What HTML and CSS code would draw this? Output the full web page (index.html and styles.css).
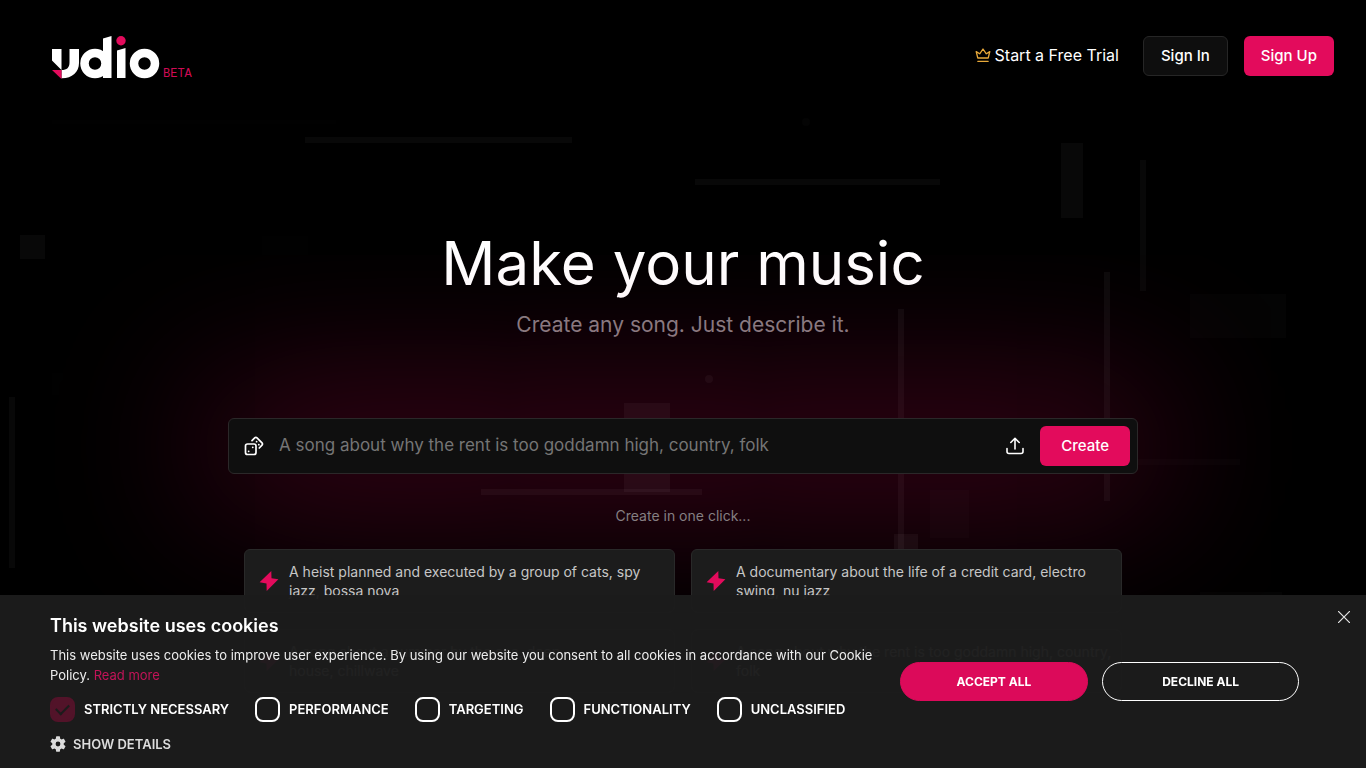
FILE: index.html
```
<!DOCTYPE html>
<html lang="en">
<head>
<meta charset="utf-8">
<meta name="viewport" content="width=device-width, initial-scale=1">
<title>Udio | Make your music</title>
<link rel="stylesheet" href="styles.css">
</head>
<body>
<svg class="backdrop" viewBox="0 0 1366 768" preserveAspectRatio="xMidYMin slice" aria-hidden="true">
  <g fill="#fff">
    <g fill-opacity=".032">
      <rect x="305" y="137" width="267" height="6"/>
      <rect x="695" y="179" width="245" height="6"/>
      <rect x="1061" y="143" width="22" height="75"/>
      <rect x="1140" y="160" width="6" height="131"/>
      <rect x="20" y="235" width="25" height="24"/>
      <rect x="9" y="397" width="6" height="171"/>
    </g>
    <g fill-opacity=".045">
      <rect x="898" y="309" width="6" height="240"/>
      <rect x="1104" y="272" width="6" height="229"/>
      <rect x="624" y="403" width="46" height="89"/>
      <rect x="481" y="489" width="221" height="6"/>
      <rect x="894" y="534" width="24" height="24"/>
      <circle cx="709" cy="379" r="4"/>
    </g>
    <g fill-opacity=".014">
      <rect x="930" y="490" width="39" height="48"/>
      <rect x="1138" y="459" width="102" height="6"/>
      <rect x="1190" y="294" width="96" height="44"/>
      <rect x="1200" y="592" width="82" height="36"/>
      <circle cx="806" cy="122" r="4"/>
    </g>
    <g fill-opacity=".005">
      <rect x="52" y="120" width="284" height="4"/>
      <rect x="262" y="236" width="46" height="24"/>
      <rect x="52" y="373" width="46" height="22"/>
    </g>
  </g>
</svg>

<header class="topbar">
  <a class="brand" href="#" aria-label="Udio beta">
    <svg class="brand-mark" width="108" height="43" viewBox="0 0 108 43" aria-hidden="true">
      <g fill="#fff">
        <path d="M0 13h9.500v21L0 24.500zM17.500 13H27v14c0 9-7 15.500-17.500 15.300V34c5.500 0 8-2.500 8-7.500z"/>
        <path d="M51 2.500 59.500 0v42H51z"/>
        <path d="M65 14.500 73.500 12v30H65z"/>
      </g>
      <circle cx="43" cy="27.500" r="10.500" fill="none" stroke="#fff" stroke-width="8.500"/>
      <circle cx="92.500" cy="27.500" r="10.500" fill="none" stroke="#fff" stroke-width="8.500"/>
      <circle cx="69" cy="4.800" r="4.700" fill="#e30b5c"/>
      <path d="M0 34h9.500v9z" fill="#e30b5c"/>
    </svg>
    <span class="brand-tag">BETA</span>
  </a>
  <nav class="account">
    <a class="trial" href="#">
      <svg width="16" height="16" viewBox="0 0 16 16" fill="none" stroke="#e8a93a" stroke-width="1.300" stroke-linejoin="round" stroke-linecap="round" aria-hidden="true">
        <path d="M2.800 11 1.200 4.600l3.500 2.200L8 2l3.300 4.800 3.500-2.200L13.200 11zM2.800 14.300h10.400"/>
      </svg>
      Start a Free Trial
    </a>
    <button class="btn btn-dark" type="button">Sign In</button>
    <button class="btn btn-pink" type="button">Sign Up</button>
  </nav>
</header>

<main class="hero">
  <h1 class="headline">Make your music</h1>
  <p class="tagline">Create any song. Just describe it.</p>

  <form class="prompt">
    <button class="icon-btn" type="button" aria-label="Random prompt">
      <svg width="20" height="20" viewBox="0 0 20 20" fill="none" stroke="#fff" stroke-width="1.700" stroke-linecap="round" stroke-linejoin="round" aria-hidden="true">
        <rect x="1.500" y="8" width="10.500" height="10.500" rx="2"/>
        <path d="m8 4.600 2.700-2.700a1.600 1.600 0 0 1 2.300 0l5 5a1.600 1.600 0 0 1 0 2.300L15.300 12"/>
        <path d="M4.600 15.300h.1M8.700 11.300h.1M12.600 5.600v.1M14.800 8.700h.1"/>
      </svg>
    </button>
    <input class="prompt-input" type="text" aria-label="Describe your song" placeholder="A song about why the rent is too goddamn high, country, folk">
    <button class="icon-btn" type="button" aria-label="Upload audio">
      <svg width="20" height="20" viewBox="0 0 20 20" fill="none" stroke="#fff" stroke-width="1.600" stroke-linecap="round" stroke-linejoin="round" aria-hidden="true">
        <path d="M2 12.500v3a2 2 0 0 0 2 2h12a2 2 0 0 0 2-2v-3M10 13V2.500M5.800 6.500 10 2.300l4.200 4.200"/>
      </svg>
    </button>
    <button class="btn btn-pink btn-create" type="submit">Create</button>
  </form>

  <p class="hint">Create in one click...</p>

  <div class="ideas">
    <button class="idea" type="button">
      <svg class="bolt" width="20" height="20" viewBox="0 0 20 20" aria-hidden="true"><path d="M12.300 0 .6 11.300l6.900 1.200L7.700 20 19.400 8.300l-6.900-1z"/></svg>
      <span>A heist planned and executed by a group of cats, spy jazz, bossa nova</span>
    </button>
    <button class="idea" type="button">
      <svg class="bolt" width="20" height="20" viewBox="0 0 20 20" aria-hidden="true"><path d="M12.300 0 .6 11.300l6.900 1.200L7.700 20 19.400 8.300l-6.900-1z"/></svg>
      <span>A documentary about the life of a credit card, electro swing, nu jazz</span>
    </button>
    <button class="idea" type="button">
      <svg class="bolt" width="20" height="20" viewBox="0 0 20 20" aria-hidden="true"><path d="M12.300 0 .6 11.300l6.900 1.200L7.700 20 19.400 8.300l-6.900-1z"/></svg>
      <span>A song about a summer by the sea, deep<br>house, chillwave</span>
    </button>
    <button class="idea" type="button">
      <svg class="bolt" width="20" height="20" viewBox="0 0 20 20" aria-hidden="true"><path d="M12.300 0 .6 11.300l6.900 1.200L7.700 20 19.400 8.300l-6.900-1z"/></svg>
      <span>A song about why the rent is too goddamn high, country, folk</span>
    </button>
  </div>
</main>

<section class="cookies" aria-label="Cookie consent">
  <div class="cookies-body">
    <h2 class="cookies-title">This website uses cookies</h2>
    <p class="cookies-text">This website uses cookies to improve user experience. By using our website you consent to all cookies in accordance with our Cookie Policy. <a class="more" href="#">Read more</a></p>
    <div class="choices">
      <label class="choice"><input class="tick" type="checkbox" checked disabled>STRICTLY NECESSARY</label>
      <label class="choice"><input class="tick" type="checkbox">PERFORMANCE</label>
      <label class="choice"><input class="tick" type="checkbox">TARGETING</label>
      <label class="choice"><input class="tick" type="checkbox">FUNCTIONALITY</label>
      <label class="choice"><input class="tick" type="checkbox">UNCLASSIFIED</label>
    </div>
    <button class="details" type="button">
      <svg width="16" height="16" viewBox="2 2 20 20" fill="#dcdcdc" aria-hidden="true"><path d="M19.140 12.940c.04-.3.060-.61.060-.94s-.02-.64-.07-.94l2.030-1.580a.49.490 0 0 0 .12-.61l-1.920-3.320a.49.490 0 0 0-.59-.22l-2.390.96a7 7 0 0 0-1.620-.94l-.36-2.540a.48.480 0 0 0-.48-.41h-3.840a.47.470 0 0 0-.47.410l-.36 2.540c-.59.240-1.130.57-1.620.94l-2.390-.96a.48.480 0 0 0-.59.220L2.740 8.870a.48.480 0 0 0 .12.610l2.030 1.580c-.05.300-.09.630-.09.940s.02.640.07.940l-2.030 1.580a.49.490 0 0 0-.12.610l1.920 3.320c.12.220.37.290.59.220l2.390-.96c.5.380 1.030.70 1.620.94l.36 2.540c.05.240.24.410.48.410h3.840c.24 0 .44-.17.470-.41l.36-2.540c.59-.24 1.130-.56 1.620-.94l2.390.96c.22.080.47 0 .59-.22l1.920-3.320a.47.470 0 0 0-.12-.61zM12 15a3 3 0 1 1 0-6 3 3 0 0 1 0 6z"/></svg>
      SHOW DETAILS
    </button>
  </div>
  <div class="cookies-actions">
    <button class="pill pill-fill" type="button">ACCEPT ALL</button>
    <button class="pill pill-line" type="button">DECLINE ALL</button>
  </div>
  <button class="close" type="button" aria-label="Close">
    <svg width="12" height="12" viewBox="0 0 12 12" stroke="#e6e6e6" stroke-width="1.200" aria-hidden="true"><path d="m0 0 12 12M12 0 0 12"/></svg>
  </button>
</section>
</body>
</html>
```
FILE: styles.css
```
* {
  box-sizing: border-box;
}

body {
  margin: 0;
  min-height: 100vh;
  overflow: hidden;
  background: #000;
  color: #fff;
  font-family: Inter, "Liberation Sans", sans-serif;
  font-size: 16px;
}

button,
input {
  font: inherit;
  color: inherit;
}

button {
  cursor: pointer;
}

h1,
h2,
p {
  margin: 0;
}

h1 {
  font-weight: 400;
}

a {
  color: inherit;
  text-decoration: none;
}

svg {
  display: block;
  flex: none;
}

.backdrop {
  position: absolute;
  inset: 0;
  z-index: -1;
  width: 100%;
  height: 100%;
}

/* Header */
.topbar {
  display: flex;
  justify-content: space-between;
  align-items: flex-start;
  padding: 36px 32px 0 52px;
}

.brand {
  display: flex;
  align-items: flex-end;
  gap: 3px;
}

.brand-tag {
  color: #d00b55;
  font-family: "Liberation Mono", monospace;
  font-size: 12px;
  line-height: 10px;
}

.account {
  display: flex;
  align-items: center;
  gap: 16px;
}

.trial {
  display: flex;
  align-items: center;
  gap: 4px;
  margin-right: 8px;
  padding-bottom: 2px;
}

.btn {
  height: 40px;
  padding: 0 16px 2px;
  border: 1px solid transparent;
  border-radius: 6px;
  font-size: 15px;
  font-weight: 500;
}

.btn-dark {
  padding: 0 17px 2px;
  background: #0e0e0e;
  border-color: #262626;
}

.btn-pink {
  background: #e30b5c;
}

/* Hero */
.hero {
  display: flex;
  flex-direction: column;
  align-items: center;
  padding: 144px 24px 0;
}

.headline {
  font-size: 60px;
  line-height: 80px;
}

.tagline {
  margin-top: 8px;
  color: #858083;
  font-size: 21px;
  line-height: 28px;
}

.prompt {
  display: flex;
  align-items: center;
  gap: 15px;
  width: 100%;
  max-width: 910px;
  height: 56px;
  margin-top: 79px;
  padding: 0 7px 0 15px;
  border: 1px solid #2b2829;
  border-radius: 6px;
  background: #0f0f0f;
  box-shadow: 0 0 160px 24px rgba(227, 11, 92, .32);
}

.icon-btn {
  padding: 0;
  border: 0;
  background: none;
}

.prompt-input {
  flex: 1;
  min-width: 0;
  padding: 0 0 2px;
  border: 0;
  outline: 0;
  background: none;
  font-size: 17px;
}

.prompt-input::placeholder {
  color: #757575;
  opacity: 1;
}

.btn-create {
  padding: 0 20px 2px;
}

.hint {
  margin-top: 32px;
  color: #857f82;
  font-size: 14px;
  line-height: 20px;
}

.ideas {
  display: grid;
  grid-template-columns: 1fr 1fr;
  gap: 16px;
  width: 100%;
  max-width: 878px;
  margin-top: 23px;
}

.idea {
  display: flex;
  align-items: center;
  gap: 10px;
  min-height: 64px;
  padding: 12px 8px 12px 14px;
  border: 1px solid #292929;
  border-radius: 6px;
  background: #1c1c1c;
  color: #c6c6c6;
  font-size: 14px;
  line-height: 19px;
  text-align: left;
}

.bolt {
  fill: #e30b5c;
}

/* Cookie banner */
.cookies {
  position: fixed;
  right: 0;
  bottom: 0;
  left: 0;
  display: flex;
  align-items: center;
  justify-content: space-between;
  gap: 20px;
  padding: 18px 67px 14px 50px;
  background: rgba(28, 28, 28, .97);
}

.cookies-body {
  flex: 1;
  max-width: 830px;
}

.cookies-title {
  font-size: 18px;
  font-weight: 600;
  line-height: 26px;
}

.cookies-text {
  margin-top: 6px;
  color: #ededed;
  font-size: 13px;
  line-height: 20px;
}

.more {
  color: #c21458;
}

.choices {
  display: flex;
  gap: 26px;
  margin-top: 12px;
}

.choice {
  display: flex;
  align-items: center;
  gap: 9px;
  font-size: 13px;
  font-weight: 600;
  line-height: 25px;
  white-space: nowrap;
}

.tick {
  appearance: none;
  width: 25px;
  height: 25px;
  margin: 0;
  border: 2px solid #fff;
  border-radius: 8px;
}

.tick:checked {
  display: grid;
  place-items: center;
  border-color: #521329;
  background: #521329;
}

.tick:checked::after {
  content: "";
  width: 11px;
  height: 6px;
  margin-bottom: 4px;
  border: solid #1c1c1c;
  border-width: 0 0 2px 2px;
  transform: rotate(-45deg);
}

.details {
  display: flex;
  align-items: center;
  gap: 7px;
  margin-top: 12px;
  padding: 0;
  border: 0;
  background: none;
  color: #dcdcdc;
  font-size: 13px;
  font-weight: 600;
  line-height: 20px;
}

.cookies-actions {
  display: flex;
  gap: 14px;
  margin-bottom: 5px;
}

.pill {
  height: 39px;
  padding: 0 56px;
  border: 1px solid #fff;
  border-radius: 20px;
  background: none;
  font-size: 12px;
  font-weight: 700;
  white-space: nowrap;
}

.pill-fill {
  border-color: #dc0a5a;
  background: #dc0a5a;
}

.pill-line {
  padding: 0 59px;
}

.close {
  position: absolute;
  top: 16px;
  right: 16px;
  padding: 0;
  border: 0;
  background: none;
}
```
